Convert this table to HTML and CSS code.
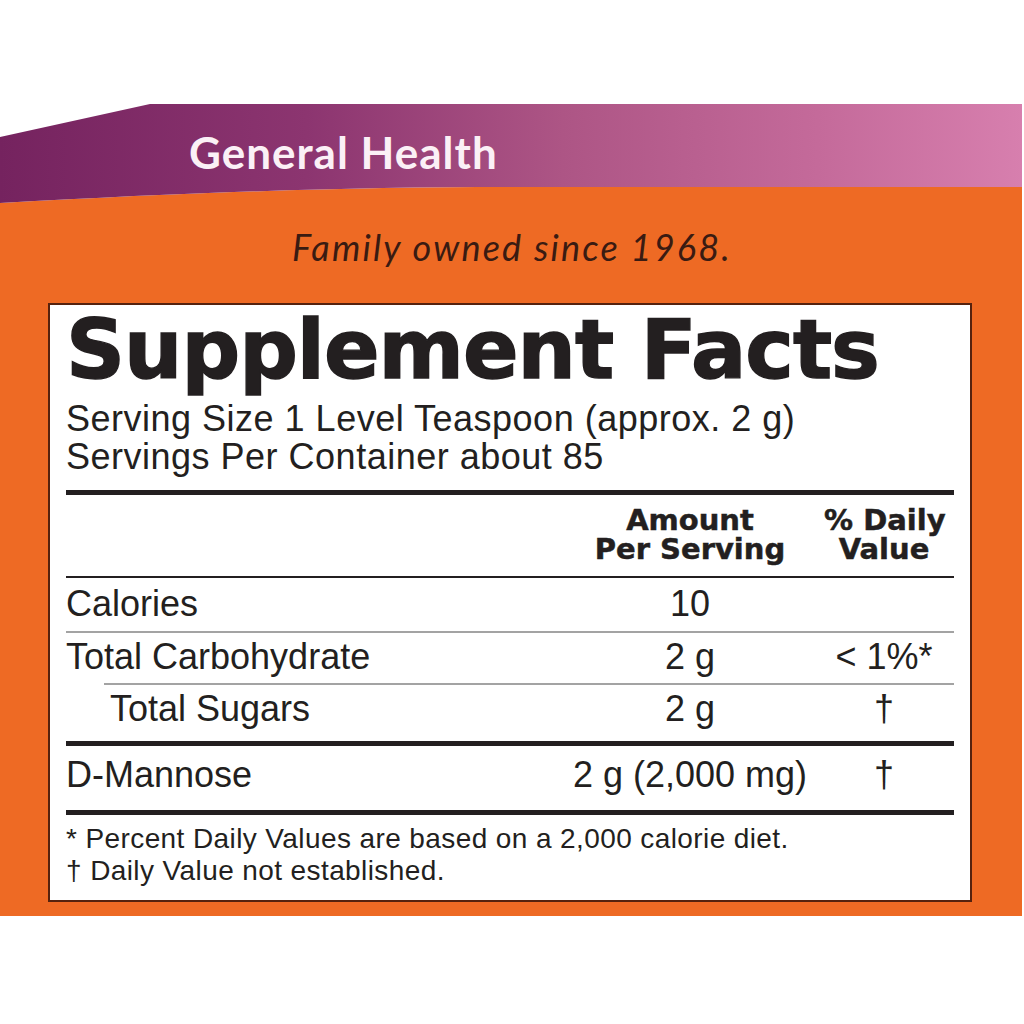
FILE: index.html
```html
<!DOCTYPE html>
<html lang="en">
<head>
<meta charset="utf-8">
<title>Supplement Facts</title>
<link rel="stylesheet" href="styles.css">
</head>
<body>
<div class="page">
  <header class="band">
    <svg class="band-bg" viewBox="0 0 1022 99" preserveAspectRatio="none" aria-hidden="true">
      <defs>
        <linearGradient id="pg" x1="0" x2="1" y1="0" y2="0">
          <stop offset="0" stop-color="#75235f"/>
          <stop offset="0.3" stop-color="#8c3570"/>
          <stop offset="0.55" stop-color="#ad5585"/>
          <stop offset="0.8" stop-color="#c46a9a"/>
          <stop offset="1" stop-color="#d77fae"/>
        </linearGradient>
      </defs>
      <path d="M0,99 C200,88 350,83 512,83 L1022,83 L1022,99 Z" fill="#ee6a24"/>
      <path d="M0,33 L150,0 L1022,0 L1022,83 L512,83 C350,83 200,88 0,99 Z" fill="url(#pg)"/>
    </svg>
    <h2 class="band-title">General Health</h2>
  </header>
  <section class="orange">
    <p class="tagline">Family owned since 1968.</p>
    <div class="facts">
      <h1 class="facts-title">Supplement Facts</h1>
      <p class="serving">Serving Size 1 Level Teaspoon (approx. 2 g)<br>Servings Per Container about 85</p>
      <div class="rule thick"></div>
      <div class="row head">
        <span></span>
        <span class="c"><span class="hl">Amount</span><span class="hl">Per Serving</span></span>
        <span class="c"><span class="hl">% Daily</span><span class="hl">Value</span></span>
      </div>
      <div class="rule thin"></div>
      <div class="row r-cal">
        <span>Calories</span>
        <span class="c">10</span>
        <span class="c"></span>
      </div>
      <div class="rule grey"></div>
      <div class="row r-carb">
        <span>Total Carbohydrate</span>
        <span class="c">2 g</span>
        <span class="c">&lt; 1%*</span>
      </div>
      <div class="rule grey indent"></div>
      <div class="row r-sug">
        <span class="sub">Total Sugars</span>
        <span class="c">2 g</span>
        <span class="c">†</span>
      </div>
      <div class="rule thick"></div>
      <div class="row r-man">
        <span>D-Mannose</span>
        <span class="c">2 g (2,000 mg)</span>
        <span class="c">†</span>
      </div>
      <div class="rule thick"></div>
      <p class="notes">* Percent Daily Values are based on a 2,000 calorie diet.<br>† Daily Value not established.</p>
    </div>
  </section>
</div>
</body>
</html>
```

FILE: styles.css
```css
html, body {
  margin: 0;
  padding: 0;
  background: #ffffff;
}

.page {
  width: 1022px;
  margin-top: 104px;
}

.band {
  position: relative;
  height: 99px;
}

.band-bg {
  position: absolute;
  left: 0;
  top: 0;
  width: 100%;
  height: 100%;
  display: block;
}

.band-title {
  position: relative;
  margin: 0;
  padding: 23px 0 0 189px;
  font-family: Lato, "Open Sans", sans-serif;
  font-weight: 700;
  font-size: 44px;
  line-height: 50px;
  color: #fbf0f6;
  letter-spacing: 1px;
}

.orange {
  background: #ee6a24;
  padding: 24px 50px 14px 48px;
}

.tagline {
  margin: 0 0 36px;
  padding-left: 4px;
  text-align: center;
  font-family: Lato, "Open Sans", sans-serif;
  font-style: italic;
  font-weight: 400;
  font-size: 36px;
  line-height: 40px;
  letter-spacing: 2.2px;
  color: #3a1b12;
}

.facts {
  background: #ffffff;
  border: 2px solid #55220e;
  padding: 2px 16px 0;
  color: #231f20;
  font-family: "Liberation Sans", Arial, sans-serif;
}

.facts-title {
  margin: 0;
  font-family: "DejaVu Sans", sans-serif;
  font-weight: 700;
  font-size: 82px;
  line-height: 86px;
  letter-spacing: -1px;
  -webkit-text-stroke: 1.4px #231f20;
  white-space: nowrap;
}

.serving {
  margin: 7px 0 0;
  font-size: 36px;
  line-height: 38px;
  letter-spacing: 0.5px;
}

.rule {
  height: 2px;
  background: #231f20;
}

.rule.thick {
  height: 5px;
  margin-top: 14px;
}

.rule.thin {
  height: 2px;
}

.rule.grey {
  background: #a3a3a3;
}

.rule.indent {
  margin-left: 38px;
}

.row {
  display: grid;
  grid-template-columns: 490px 260px 120px;
  column-gap: 4px;
  font-size: 36px;
  line-height: 40px;
  white-space: nowrap;
}

.row .c {
  text-align: center;
}

.row .sub {
  padding-left: 44px;
}

.row.head {
  font-family: "DejaVu Sans", sans-serif;
  font-weight: 700;
  font-size: 29px;
  line-height: 29px;
  padding: 11px 0 12px;
  -webkit-text-stroke: 0.5px #231f20;
}

.row.head .hl {
  display: block;
  height: 29px;
}

.row.r-cal {
  padding: 6px 0 7px;
}

.row.r-carb {
  padding: 4px 0 6px;
}

.row.r-sug {
  padding: 4px 0 0;
}

.row.r-sug + .rule.thick {
  margin-top: 12px;
}

.row.r-man {
  padding: 9px 0 0;
}

.row.r-man + .rule.thick {
  margin-top: 15px;
}

.notes {
  margin: 0;
  padding: 8px 0 13px;
  font-size: 28px;
  line-height: 32px;
  letter-spacing: 0.4px;
}
```
